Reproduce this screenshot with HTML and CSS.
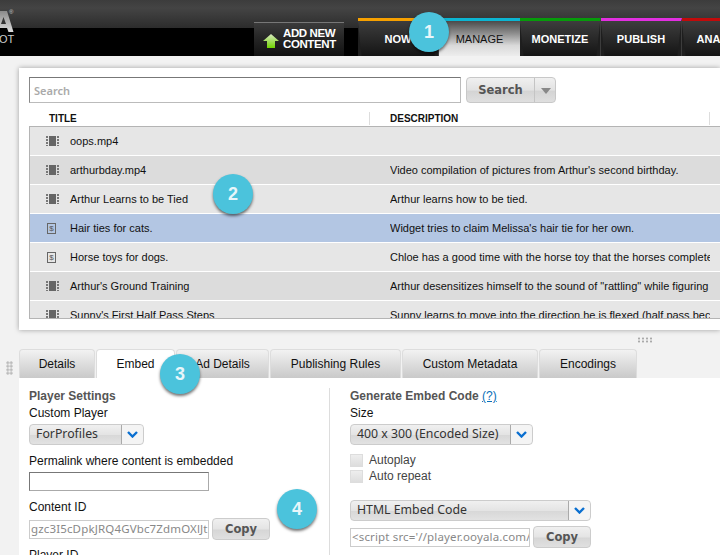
FILE: index.html
```html
<!DOCTYPE html>
<html>
<head>
    <meta charset="UTF-8">
    <title>Manage</title>
    <link rel="stylesheet" href="styles.css">
</head>
<body>
    <div class="page">
        <div class="header">
            <div class="logo">
                <svg class="logoMark" width="16" height="22" viewBox="0 0 16 22"><defs><linearGradient id="logoFill" x1="0" y1="0" x2="0" y2="1"><stop offset="0" stop-color="#8a8a8a"/><stop offset="1" stop-color="#dcdcdc"/></linearGradient></defs><path fill-rule="evenodd" d="M-8 21 L0 0 H7 L13.5 21 H8.5 L7 17 H0 L-2 21Z M3.5 6 L6 13 H1Z" fill="url(#logoFill)"/></svg>
                <span class="logoReg">®</span>
                <span class="logoSub">OT</span>
            </div>
            <div class="addNew">
                <svg width="16" height="15" viewBox="0 0 16 15"><defs><linearGradient id="arrowFill" x1="0" y1="0" x2="0" y2="1"><stop offset="0" stop-color="#d8e8c0"/><stop offset="1" stop-color="#6fd400"/></linearGradient></defs><path d="M8 0 L16 7 H12 V14 H4 V7 H0Z" fill="url(#arrowFill)"/></svg>
                <span>ADD NEW<br>CONTENT</span>
            </div>
            <div class="nav">
                <div class="navTab orange">NOW</div>
                <div class="navTab cyan active">MANAGE</div>
                <div class="navTab green">MONETIZE</div>
                <div class="navTab magenta">PUBLISH</div>
                <div class="navTab red">ANALYZE</div>
            </div>
        </div>

        <div class="card">
            <div class="searchRow">
                <input class="searchBox" type="text" placeholder="Search">
                <div class="searchBtn"><span class="searchLabel">Search</span><span class="searchCaret"></span></div>
            </div>
            <div class="colHead">
                <div class="colTitle">TITLE</div>
                <div class="colDesc">DESCRIPTION</div>
            </div>
            <div class="rows">
                <div class="row"><span class="film"></span><div class="title">oops.mp4</div><div class="desc"></div></div>
                <div class="row alt"><span class="film"></span><div class="title">arthurbday.mp4</div><div class="desc">Video compilation of pictures from Arthur's second birthday.</div></div>
                <div class="row"><span class="film"></span><div class="title">Arthur Learns to be Tied</div><div class="desc">Arthur learns how to be tied.</div></div>
                <div class="row selected"><span class="money">$</span><div class="title">Hair ties for cats.</div><div class="desc">Widget tries to claim Melissa's hair tie for her own.</div></div>
                <div class="row"><span class="money">$</span><div class="title">Horse toys for dogs.</div><div class="desc">Chloe has a good time with the horse toy that the horses completely ignore.</div></div>
                <div class="row alt"><span class="film"></span><div class="title">Arthur's Ground Training</div><div class="desc">Arthur desensitizes himself to the sound of "rattling" while figuring it out.</div></div>
                <div class="row"><span class="film"></span><div class="title">Sunny's First Half Pass Steps</div><div class="desc">Sunny learns to move into the direction he is flexed (half pass because of it).</div></div>
            </div>
        </div>

        <div class="gripRow"><span class="gripH"></span></div>

        <div class="tabBar">
            <span class="gripV"></span>
            <div class="tab tabDetails">Details</div>
            <div class="tab tabEmbed active">Embed</div>
            <div class="tab tabAd">Ad Details</div>
            <div class="tab tabRules">Publishing Rules</div>
            <div class="tab tabMeta">Custom Metadata</div>
            <div class="tab tabEnc">Encodings</div>
        </div>

        <div class="panel">
            <div class="leftCol">
                <div class="heading">Player Settings</div>
                <div class="label">Custom Player</div>
                <div class="select w115"><span class="selectText">ForProfiles</span><span class="selectArrow"><svg width="11" height="7" viewBox="0 0 11 7"><path d="M1 1 L5.5 5.5 L10 1" fill="none" stroke="#0a6fd0" stroke-width="2.4"/></svg></span></div>
                <div class="label gapPermalink">Permalink where content is embedded</div>
                <div class="field"></div>
                <div class="label gapContent">Content ID</div>
                <div class="copyRow">
                    <div class="idBox">gzc3I5cDpkJRQ4GVbc7ZdmOXlJtbcxyz</div>
                    <div class="copyBtn">Copy</div>
                </div>
                <div class="label gapPlayer">Player ID</div>
            </div>
            <div class="rightCol">
                <div class="heading">Generate Embed Code <a class="help" href="#">(?)</a></div>
                <div class="label">Size</div>
                <div class="select w183"><span class="selectText">400 x 300 (Encoded Size)</span><span class="selectArrow"><svg width="11" height="7" viewBox="0 0 11 7"><path d="M1 1 L5.5 5.5 L10 1" fill="none" stroke="#0a6fd0" stroke-width="2.4"/></svg></span></div>
                <div class="check first"><span class="box"></span>Autoplay</div>
                <div class="check"><span class="box"></span>Auto repeat</div>
                <div class="select w241 gapCode"><span class="selectText">HTML Embed Code</span><span class="selectArrow"><svg width="11" height="7" viewBox="0 0 11 7"><path d="M1 1 L5.5 5.5 L10 1" fill="none" stroke="#0a6fd0" stroke-width="2.4"/></svg></span></div>
                <div class="copyRow tight">
                    <div class="idBox">&lt;script src='//player.ooyala.com/player.js'&gt;</div>
                    <div class="copyBtn">Copy</div>
                </div>
            </div>
        </div>

        <div class="badge b1">1</div>
        <div class="badge b2">2</div>
        <div class="badge b3">3</div>
        <div class="badge b4">4</div>
    </div>
</body>
</html>
```

FILE: styles.css
```css
html, body {
    margin: 0;
    padding: 0;
    height: 100%;
    overflow: hidden;
}

body {
    background-color: #f2f2f2;
    font-family: "Liberation Sans", Arial, sans-serif;
    font-size: 12px;
    color: #111;
}

.page {
    position: relative;
    width: 720px;
    height: 555px;
    overflow: hidden;
}

/* top bar */
.header {
    height: 56px;
    display: flex;
    align-items: flex-end;
    background: linear-gradient(#3c3c3c 0, #444 8px, #2c2c2c 28px, #000 28px, #000 100%);
}

.logo {
    position: relative;
    width: 84px;
    height: 56px;
    flex-shrink: 0;
}

.logoMark {
    position: absolute;
    left: 0;
    top: 11px;
}

.logoReg {
    position: absolute;
    left: 9px;
    top: 9px;
    font-size: 6px;
    color: #ccc;
}

.logoSub {
    position: absolute;
    left: -1px;
    top: 33px;
    font-size: 11px;
    color: #ccc;
}

.addNew {
    width: 90px;
    height: 34px;
    margin-left: 170px;
    flex-shrink: 0;
    display: flex;
    align-items: center;
    gap: 4px;
    padding: 0 0 2px 9px;
    box-sizing: border-box;
    border-top: 1px solid #777;
    background: linear-gradient(#3b3b3b, #262626 45%, #111);
    color: #fff;
    font-size: 11.5px;
    font-weight: bold;
    line-height: 11px;
    letter-spacing: -0.4px;
}

.addNew svg {
    margin-top: 5px;
    flex-shrink: 0;
}

.nav {
    display: flex;
    margin-left: 14px;
}

.navTab {
    width: 81px;
    height: 38px;
    flex-shrink: 0;
    padding-top: 9px;
    box-sizing: border-box;
    border-top: 3px solid #888;
    border-right: 1px solid #3c3c3c;
    background:
        linear-gradient(84deg, #1e1e1e 0, #1e1e1e 3px, transparent 4px),
        linear-gradient(276deg, #1e1e1e 0, #1e1e1e 3px, transparent 4px),
        linear-gradient(#3d3d3d, #272727 55%, #141414);
    color: #fff;
    font-size: 11px;
    font-weight: bold;
    text-align: center;
    line-height: 18px;
}

.navTab.active {
    border-right: none;
    background: linear-gradient(#4a4a4a, #8d8d8d 35%, #d9d9d9 70%, #ededed);
    color: #111;
    font-weight: normal;
}

.orange { border-top-color: #f6a000; }
.cyan { border-top-color: #0cb5d2; }
.green { border-top-color: #069b0a; }
.magenta { border-top-color: #e22fe0; }
.red { border-top-color: #c10a0a; }

/* asset list */
.card {
    height: 262px;
    margin: 12px 0 0 19px;
    padding: 9px 0 0 10px;
    box-sizing: border-box;
    background-color: #fff;
    box-shadow: 0 0 5px rgba(0, 0, 0, 0.35);
}

.searchRow {
    display: flex;
    gap: 5px;
}

.searchBox {
    width: 432px;
    height: 26px;
    margin: 0;
    padding: 0 4px;
    box-sizing: border-box;
    border: 1px solid #bbb;
    border-top-color: #777;
    border-left-color: #888;
    font-family: "Noto Sans", sans-serif;
    font-size: 11px;
    outline: none;
}

.searchBox::placeholder {
    color: #aaa;
    font-weight: 600;
}

.searchBtn {
    width: 90px;
    height: 26px;
    display: flex;
    box-sizing: border-box;
    border: 1px solid #c8c8c8;
    border-radius: 4px;
    background: linear-gradient(#f0f0f0, #e2e2e2 50%, #d4d4d4 55%, #dfdfdf);
}

.searchLabel {
    width: 67px;
    border-right: 1px solid #c4c4c4;
    color: #555;
    font-family: "DejaVu Sans", sans-serif;
    font-size: 11.5px;
    font-weight: bold;
    text-align: center;
    line-height: 24px;
}

.searchCaret {
    width: 0;
    height: 0;
    margin: 10px 0 0 6px;
    border-left: 5px solid transparent;
    border-right: 5px solid transparent;
    border-top: 6px solid #888;
}

.colHead {
    display: flex;
    height: 16px;
    margin-top: 7px;
    font-size: 10px;
    font-weight: bold;
}

.colTitle {
    width: 320px;
    padding-left: 20px;
    height: 13px;
    margin-top: 2px;
    line-height: 13px;
    border-right: 1px solid #ddd;
}

.colDesc {
    width: 319px;
    padding-left: 20px;
    height: 13px;
    margin-top: 2px;
    line-height: 13px;
    border-right: 1px solid #ddd;
}

.rows {
    height: 193px;
    overflow: hidden;
    border-top: 1px solid #b4b4b4;
    border-left: 1px solid #b4b4b4;
    border-bottom: 1px solid #b4b4b4;
    box-sizing: border-box;
}

.row {
    height: 28px;
    display: flex;
    align-items: center;
    margin-bottom: 1px;
    background-color: #e6e6e6;
    font-size: 11px;
}

.row.alt {
    background-color: #dcdcdc;
}

.row.selected {
    background-color: #b3c6e3;
}

.film {
    width: 13px;
    height: 10px;
    margin: 0 11px 0 16px;
    flex-shrink: 0;
    background:
        linear-gradient(#666, #666) 3px 0 / 7px 100% no-repeat,
        repeating-linear-gradient(#777 0, #777 2px, transparent 2px, transparent 3px) 0 0 / 2px 100% no-repeat,
        repeating-linear-gradient(#777 0, #777 2px, transparent 2px, transparent 3px) 11px 0 / 2px 100% no-repeat;
}

.money {
    width: 7px;
    height: 9px;
    margin: 0 14px 0 17px;
    flex-shrink: 0;
    border: 1px solid #666;
    color: #555;
    font-size: 8px;
    line-height: 9px;
    text-align: center;
}

.title {
    width: 320px;
    flex-shrink: 0;
}

.desc {
    width: 320px;
    overflow: hidden;
    white-space: nowrap;
}

/* resize grips */
.gripRow {
    height: 19px;
    padding: 7px 0 0 637px;
    box-sizing: border-box;
}

.gripH {
    display: block;
    width: 16px;
    height: 6px;
    background-image: radial-gradient(#aaa 1.3px, transparent 1.5px);
    background-size: 4px 3px;
}

.tabBar {
    position: relative;
    display: flex;
    height: 29px;
    padding-left: 19px;
    gap: 1px;
}

.gripV {
    position: absolute;
    left: 6px;
    top: 12px;
    width: 7px;
    height: 14px;
    background-image: radial-gradient(#bbb 1.3px, transparent 1.5px);
    background-size: 3.5px 3.5px;
}

.tab {
    box-sizing: border-box;
    border: 1px solid #ddd;
    border-bottom: none;
    border-radius: 4px 4px 0 0;
    background: linear-gradient(#f2f2f2, #c9c9c9);
    text-align: center;
    line-height: 28px;
}

.tab.active {
    background: #fff;
}

.tabDetails { width: 76px; }
.tabEmbed { width: 79px; }
.tabAd { width: 93px; }
.tabRules { width: 131px; }
.tabMeta { width: 136px; }
.tabEnc { width: 98px; }

.panel {
    display: flex;
    height: 177px;
    margin-left: 19px;
    background-color: #fff;
}

.leftCol {
    width: 311px;
    height: 167px;
    margin: 10px 20px 0 0;
    padding: 1px 0 0 10px;
    box-sizing: border-box;
    border-right: 1px solid #ddd;
}

.rightCol {
    margin-top: 10px;
    padding-top: 1px;
}

.heading {
    color: #555;
    font-weight: bold;
    line-height: 15px;
}

.help {
    color: #0a6fb8;
    font-weight: normal;
}

.label {
    margin-top: 2px;
    line-height: 15px;
}

.gapPermalink { margin-top: 9px; }
.gapContent { margin-top: 9px; }
.gapPlayer { margin-top: 8px; }

.select {
    display: flex;
    height: 21px;
    margin-top: 3px;
    box-sizing: border-box;
    border: 1px solid #ccc;
    border-radius: 4px;
    background: linear-gradient(#f0f0f0, #e4e4e4 50%, #d8d8d8 55%, #e2e2e2);
    font-family: "Noto Sans", sans-serif;
    font-size: 12.3px;
    color: #333;
    line-height: 18px;
}

.w115 { width: 115px; }
.w183 { width: 183px; }
.w241 { width: 241px; }

.selectText {
    flex: 1;
    padding-left: 6px;
    white-space: nowrap;
}

.selectArrow {
    width: 21px;
    display: flex;
    align-items: center;
    justify-content: center;
    border-left: 1px solid #aaa;
    background-color: #f4f4f4;
    border-radius: 0 4px 4px 0;
}

.field {
    width: 180px;
    height: 19px;
    margin-top: 3px;
    box-sizing: border-box;
    border: 1px solid #aaa;
    border-top-color: #777;
    border-left-color: #777;
}

.copyRow {
    display: flex;
    align-items: center;
    gap: 3px;
    margin-top: 3px;
}

.copyRow.tight {
    margin-top: 5px;
}

.idBox {
    width: 180px;
    height: 19px;
    padding-left: 1px;
    box-sizing: border-box;
    overflow: hidden;
    white-space: nowrap;
    border: 1px solid #ccc;
    color: #888;
    font-family: "Noto Sans", sans-serif;
    font-size: 11.5px;
    letter-spacing: 0.15px;
    line-height: 16px;
}

.copyBtn {
    width: 58px;
    height: 22px;
    box-sizing: border-box;
    border: 1px solid #ccc;
    border-radius: 4px;
    background: linear-gradient(#f0f0f0, #e4e4e4 50%, #d6d6d6 55%, #e0e0e0);
    color: #555;
    font-family: "DejaVu Sans", sans-serif;
    font-size: 11.5px;
    font-weight: bold;
    text-align: center;
    line-height: 20px;
}

.check {
    display: flex;
    align-items: center;
    gap: 6px;
    height: 16px;
    color: #444;
}

.check.first {
    margin-top: 7px;
}

.box {
    width: 13px;
    height: 13px;
    box-sizing: border-box;
    border: 1px solid #ddd;
    background: linear-gradient(#eee, #ddd);
}

.gapCode {
    margin-top: 16px;
}

/* numbered callouts */
.badge {
    position: absolute;
    width: 40px;
    height: 40px;
    border-radius: 50%;
    background-color: #4bc3dc;
    box-shadow: 0 2px 3px rgba(0, 0, 0, 0.55);
    color: #e8f6fa;
    font-size: 18px;
    font-weight: bold;
    text-align: center;
    line-height: 40px;
}

.b1 { left: 409px; top: 12px; }
.b2 { left: 213px; top: 174px; }
.b3 { left: 160px; top: 354px; }
.b4 { left: 277px; top: 489px; }
```
